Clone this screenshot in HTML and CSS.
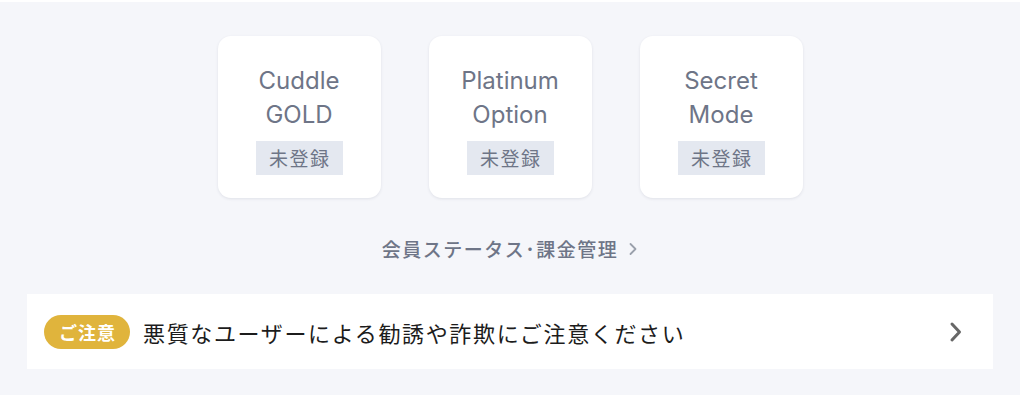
FILE: index.html
```html
<!DOCTYPE html>
<html lang="ja">
<head>
<meta charset="utf-8">
<link rel="stylesheet" href="styles.css">
</head>
<body>
<main class="page">
  <section class="plans">
    <div class="card">
      <div class="card-title">Cuddle<br>GOLD</div>
      <div class="status">未登録</div>
    </div>
    <div class="card">
      <div class="card-title">Platinum<br>Option</div>
      <div class="status">未登録</div>
    </div>
    <div class="card">
      <div class="card-title">Secret<br>Mode</div>
      <div class="status">未登録</div>
    </div>
  </section>
  <a class="manage-link" href="#">会員ステータス･課金管理
    <svg class="link-chev" width="10" height="14" viewBox="0 0 10 14"><path d="M2.5 2 L7.5 7 L2.5 12" fill="none" stroke="#9aa0ab" stroke-width="1.8" stroke-linecap="round" stroke-linejoin="round"/></svg>
  </a>
  <div class="notice">
    <span class="notice-badge">ご注意</span>
    <span class="notice-text">悪質なユーザーによる勧誘や詐欺にご注意ください</span>
    <svg class="notice-chev" width="14" height="22" viewBox="0 0 14 22"><path d="M3 3 L10.5 11 L3 19" fill="none" stroke="#676767" stroke-width="3" stroke-linecap="round" stroke-linejoin="round"/></svg>
  </div>
</main>
</body>
</html>
```

FILE: styles.css
```css
html, body {
  margin: 0;
  padding: 0;
  background: #ffffff;
}
body {
  font-family: Inter, "Noto Sans CJK JP", sans-serif;
}
.page {
  width: 1020px;
  height: 393px;
  margin-top: 2px;
  background: #f5f6fa;
  box-sizing: border-box;
  padding: 34px 27px 0;
  display: flex;
  flex-direction: column;
  align-items: center;
}
.plans {
  display: flex;
  gap: 48px;
}
.card {
  width: 163px;
  height: 162px;
  box-sizing: border-box;
  background: #fff;
  border-radius: 13px;
  box-shadow: 0 1px 3px rgba(40, 50, 80, 0.10);
  padding-top: 28px;
  display: flex;
  flex-direction: column;
  align-items: center;
}
.card-title {
  font-size: 24px;
  line-height: 34px;
  color: #6e7587;
  text-align: center;
}
.status {
  margin-top: 9px;
  height: 34px;
  width: 87px;
  background: #e4e8f0;
  color: #6e7587;
  font-family: "Noto Sans CJK JP", sans-serif;
  font-size: 19px;
  letter-spacing: 1.5px;
  text-indent: 1.5px;
  line-height: 34px;
  text-align: center;
}
.manage-link {
  margin-top: 38px;
  display: flex;
  align-items: center;
  gap: 10px;
  font-family: "Noto Sans CJK JP", sans-serif;
  font-size: 19px;
  font-weight: 500;
  line-height: 26px;
  color: #6e7587;
  text-decoration: none;
  letter-spacing: 1.5px;
}
.notice {
  margin-top: 32px;
  align-self: stretch;
  height: 75px;
  background: #fff;
  display: flex;
  align-items: center;
  padding: 0 30px 0 17px;
}
.notice-badge {
  width: 86px;
  height: 34px;
  border-radius: 17px;
  background: #e0b43c;
  color: #fff;
  font-family: "Noto Sans CJK JP", sans-serif;
  font-weight: 700;
  font-size: 18px;
  letter-spacing: 1px;
  text-indent: 1px;
  line-height: 34px;
  text-align: center;
}
.notice-text {
  margin-left: 13px;
  flex: 1;
  font-family: "Noto Sans CJK JP", sans-serif;
  font-size: 22px;
  color: #1c1c1c;
  letter-spacing: 1.65px;
}
.notice-chev {
  flex: none;
}
```
